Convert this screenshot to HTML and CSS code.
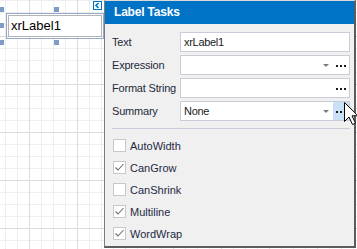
FILE: index.html
```html
<!DOCTYPE html>
<html>
<head>
<meta charset="utf-8">
<link rel="stylesheet" href="styles.css">
</head>
<body>
<div class="canvas">
  <div class="handle h-tl"></div>
  <div class="handle h-tm"></div>
  <div class="handle h-ml"></div>
  <div class="handle h-bl"></div>
  <div class="handle h-bm"></div>
  <div class="label-ctl"><div class="label-inner">xrLabel1</div></div>
  <div class="smart-tag"><svg width="7" height="7" viewBox="0 0 7 7"><polyline points="4.5,1 2,3.5 4.5,6" fill="none" stroke="#0072c6" stroke-width="1.6"/></svg></div>

  <div class="panel">
    <div class="panel-header">Label Tasks</div>
    <div class="panel-body">
      <div class="props">
        <div class="prop">
          <span class="prop-label">Text</span>
          <div class="field"><span class="field-text">xrLabel1</span></div>
        </div>
        <div class="prop">
          <span class="prop-label">Expression</span>
          <div class="field"><span class="field-text"></span><span class="drop"></span><span class="ell"><i></i><i></i><i></i></span></div>
        </div>
        <div class="prop">
          <span class="prop-label">Format String</span>
          <div class="field"><span class="field-text"></span><span class="ell"><i></i><i></i><i></i></span></div>
        </div>
        <div class="prop">
          <span class="prop-label">Summary</span>
          <div class="field"><span class="field-text">None</span><span class="drop"></span><span class="ell ell-hot"><i></i><i></i><i></i></span></div>
        </div>
      </div>
      <div class="sep"></div>
      <div class="checks">
        <div class="check"><span class="box"></span><span class="check-text">AutoWidth</span></div>
        <div class="check"><span class="box"><svg width="11" height="11" viewBox="0 0 11 11"><polyline points="1.5,5.5 4,8 9.5,2" fill="none" stroke="#6e6e6e" stroke-width="1.1"/></svg></span><span class="check-text">CanGrow</span></div>
        <div class="check"><span class="box"></span><span class="check-text">CanShrink</span></div>
        <div class="check"><span class="box"><svg width="11" height="11" viewBox="0 0 11 11"><polyline points="1.5,5.5 4,8 9.5,2" fill="none" stroke="#6e6e6e" stroke-width="1.1"/></svg></span><span class="check-text">Multiline</span></div>
        <div class="check"><span class="box"><svg width="11" height="11" viewBox="0 0 11 11"><polyline points="1.5,5.5 4,8 9.5,2" fill="none" stroke="#6e6e6e" stroke-width="1.1"/></svg></span><span class="check-text">WordWrap</span></div>
      </div>
    </div>
  </div>

  <svg class="cursor" width="15" height="24" viewBox="0 0 15 24"><path d="M0.5,0.5 L0.5,19.5 L5,15 L8.5,22.5 L11.5,21.2 L8,13.8 L14,13.8 Z" fill="#fff" stroke="#000" stroke-width="1"/></svg>
</div>
</body>
</html>
```

FILE: styles.css
```css
html, body {
  margin: 0;
  padding: 0;
}
body {
  width: 357px;
  height: 249px;
  overflow: hidden;
  font-family: "Liberation Sans", Arial, sans-serif;
}
.canvas {
  position: relative;
  width: 357px;
  height: 249px;
  background-color: #fff;
  background-image:
    linear-gradient(to right, #dcdcdc 1px, transparent 1px),
    linear-gradient(to bottom, #dcdcdc 1px, transparent 1px),
    linear-gradient(to right, #eeeeee 1px, transparent 1px),
    linear-gradient(to bottom, #eeeeee 1px, transparent 1px);
  background-size: 48px 100%, 100% 48px, 12px 100%, 100% 12px;
  background-position: 29px 0, 0 36px, 5px 0, 0 0;
}
.handle {
  position: absolute;
  width: 5px;
  height: 5px;
  background: #7f9cc8;
}
.h-tl { left: -1px; top: 7px; }
.h-tm { left: 54px; top: 7px; }
.h-ml { left: -1px; top: 23px; }
.h-bl { left: -1px; top: 40px; }
.h-bm { left: 54px; top: 40px; }

.label-ctl {
  position: absolute;
  left: 6px;
  top: 13px;
  width: 98px;
  height: 26px;
  box-sizing: border-box;
  border: 1px solid #94a9cc;
  padding: 1px;
}
.label-inner {
  box-sizing: border-box;
  height: 100%;
  border: 1px solid #b4b4b4;
  background: #fff;
  font-size: 13px;
  line-height: 20px;
  padding-left: 2px;
  color: #000;
}
.smart-tag {
  position: absolute;
  left: 93px;
  top: 1px;
  width: 9px;
  height: 9px;
  box-sizing: border-box;
  border: 1px solid #0072c6;
  background: #fff;
  display: flex;
  align-items: center;
  justify-content: center;
}

.panel {
  position: absolute;
  left: 104px;
  top: 0;
  width: 252px;
  height: 248px;
  box-sizing: border-box;
  background: #f0f0f0;
  border-top: 1px solid #d9d9d9;
  border-left: 1px solid #7d7d7d;
  border-right: 2px solid #5c5c5c;
  border-bottom: 2px solid #5c5c5c;
  display: flex;
  flex-direction: column;
}
.panel-header {
  height: 23px;
  background: #0173c7;
  color: #fff;
  font-weight: bold;
  font-size: 12px;
  letter-spacing: -0.2px;
  line-height: 23px;
  padding-left: 9px;
}
.panel-body {
  padding: 8px 4px 0 7px;
  display: flex;
  flex-direction: column;
}
.props {
  display: flex;
  flex-direction: column;
  gap: 3px;
}
.prop {
  display: flex;
  align-items: center;
  height: 20px;
}
.prop-label {
  width: 68px;
  font-size: 11px;
  letter-spacing: -0.2px;
  color: #1e2a3c;
}
.field {
  flex: 1;
  height: 20px;
  box-sizing: border-box;
  border: 1px solid #cbccd8;
  background: #fff;
  display: flex;
  align-items: stretch;
}
.field-text {
  flex: 1;
  padding-left: 3px;
  font-size: 11px;
  letter-spacing: -0.3px;
  line-height: 18px;
  color: #1a1a1a;
}
.drop {
  width: 6px;
  margin-right: 4px;
  display: flex;
  align-items: center;
}
.drop::before {
  content: "";
  display: block;
  width: 0;
  height: 0;
  border-left: 3px solid transparent;
  border-right: 3px solid transparent;
  border-top: 3px solid #7d7d7d;
}
.ell {
  width: 16px;
  display: flex;
  align-items: center;
  justify-content: center;
  gap: 2px;
  padding-top: 1px;
  box-sizing: border-box;
}
.ell i {
  display: block;
  width: 2px;
  height: 2px;
  background: #1a1a1a;
}
.ell-hot {
  background: #c9e0f7;
}
.sep {
  height: 1px;
  background: #cacbd7;
  margin: 7px 0 0 0;
  width: 238px;
}
.checks {
  display: flex;
  flex-direction: column;
  gap: 9px;
  margin-top: 10px;
}
.check {
  display: flex;
  align-items: center;
  height: 13px;
}
.box {
  width: 13px;
  height: 13px;
  box-sizing: border-box;
  border: 1px solid #c8c8c8;
  background: #fff;
  margin-left: 1px;
  margin-right: 4px;
  display: flex;
  align-items: center;
  justify-content: center;
}
.check-text {
  font-size: 11px;
  color: #1e2a44;
}
.cursor {
  position: absolute;
  left: 344px;
  top: 102px;
}
```
